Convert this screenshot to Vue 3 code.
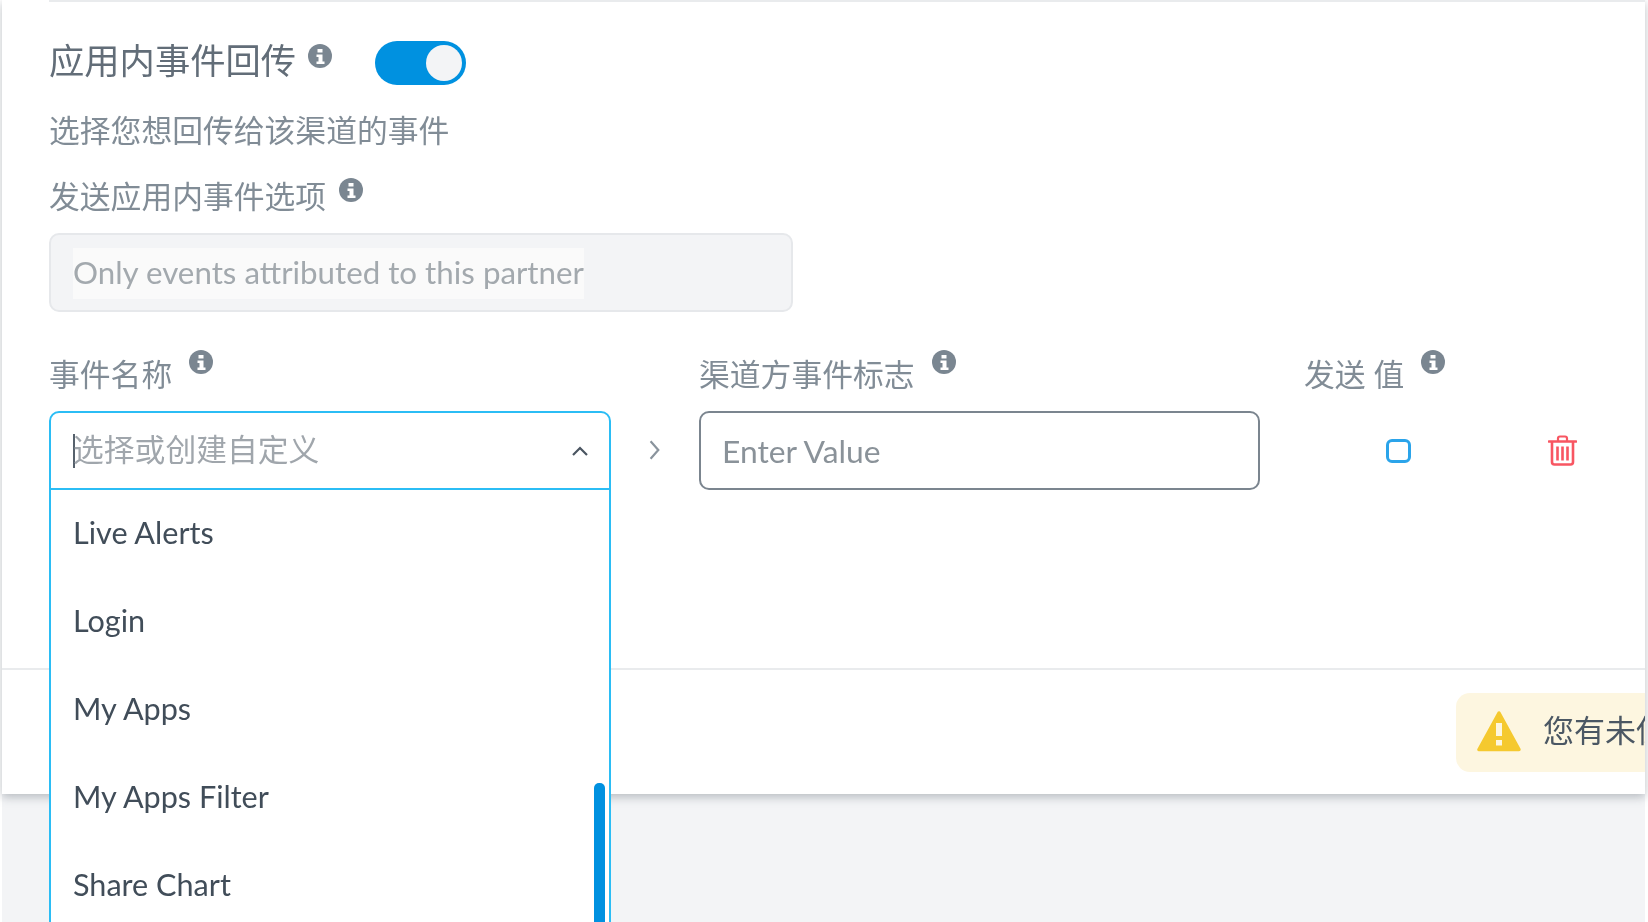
<script setup>
const options = ['Live Alerts', 'Login', 'My Apps', 'My Apps Filter', 'Share Chart', 'Sign Up']
</script>

<template>
  <div class="page">
    <main class="panel">
      <section class="form">
        <div class="title-row">
          <h2 class="title">应用内事件回传</h2>
          <svg class="info info-title" viewBox="0 0 24 24"><circle cx="12" cy="12" r="12" fill="#7a8691"/><path d="M9.500 5h5v3.500h-5zM8.500 10.500h6v7h2V20h-8v-2.500h2v-4.500h-2z" fill="#fff"/></svg>
          <div class="toggle"><span class="knob"></span></div>
        </div>
        <p class="subtitle">选择您想回传给该渠道的事件</p>
        <div class="label option-label">
          <span>发送应用内事件选项</span>
          <svg class="info" viewBox="0 0 24 24"><circle cx="12" cy="12" r="12" fill="#7a8691"/><path d="M9.500 5h5v3.500h-5zM8.500 10.500h6v7h2V20h-8v-2.500h2v-4.500h-2z" fill="#fff"/></svg>
        </div>
        <div class="disabled-input"><span class="disabled-text">Only events attributed to this partner</span></div>

        <div class="mapping">
          <div class="col col-event">
            <div class="label">
              <span>事件名称</span>
              <svg class="info" viewBox="0 0 24 24"><circle cx="12" cy="12" r="12" fill="#7a8691"/><path d="M9.500 5h5v3.500h-5zM8.500 10.500h6v7h2V20h-8v-2.500h2v-4.500h-2z" fill="#fff"/></svg>
            </div>
            <div class="select">
              <span class="caret"></span>
              <span class="placeholder">选择或创建自定义</span>
              <svg class="chevron-up" viewBox="0 0 18 12"><path d="M2 10l7-7 7 7" fill="none" stroke="#4a5561" stroke-width="2.200"/></svg>
              <ul class="menu">
                <li v-for="o in options" :key="o" class="menu-item">{{ o }}</li>
                <span class="scrollbar"></span>
              </ul>
            </div>
          </div>
          <div class="arrow-col">
            <svg class="chevron-right" viewBox="0 0 12 20"><path d="M2 2l7 8-7 8" fill="none" stroke="#8a949d" stroke-width="2"/></svg>
          </div>
          <div class="col col-value">
            <div class="label">
              <span>渠道方事件标志</span>
              <svg class="info" viewBox="0 0 24 24"><circle cx="12" cy="12" r="12" fill="#7a8691"/><path d="M9.500 5h5v3.500h-5zM8.500 10.500h6v7h2V20h-8v-2.500h2v-4.500h-2z" fill="#fff"/></svg>
            </div>
            <div class="value-input">Enter Value</div>
          </div>
          <div class="col col-send">
            <div class="label">
              <span>发送 值</span>
              <svg class="info" viewBox="0 0 24 24"><circle cx="12" cy="12" r="12" fill="#7a8691"/><path d="M9.500 5h5v3.500h-5zM8.500 10.500h6v7h2V20h-8v-2.500h2v-4.500h-2z" fill="#fff"/></svg>
            </div>
            <div class="send-controls">
              <span class="checkbox"></span>
              <svg class="trash" viewBox="0 0 29 31">
                <path d="M1 6.500h27" stroke="#f85662" stroke-width="2.600" fill="none" stroke-linecap="round"/>
                <path d="M10 6V3.500Q10 1.500 12 1.500h5Q19 1.500 19 3.500V6" stroke="#f85662" stroke-width="2.200" fill="none"/>
                <path d="M4 7v20q0 2.500 2.500 2.500h16q2.500 0 2.500-2.500V7" stroke="#f85662" stroke-width="2.600" fill="none"/>
                <path d="M9.500 11.500v14M14.500 11.500v14M19.500 11.500v14" stroke="#f85662" stroke-width="2.600" fill="none"/>
              </svg>
            </div>
          </div>
        </div>
      </section>

      <footer class="footer">
        <div class="warning">
          <svg class="warn-icon" viewBox="0 0 44 41"><path d="M22 2L2 38.500h40z" fill="#f5c92f" stroke="#f5c92f" stroke-width="3.500" stroke-linejoin="round"/><path d="M19 12h6v13h-6zM19 29h6v5.500h-6z" fill="#fdf6e0"/></svg>
          <span class="warn-text">您有未保存的更改</span>
        </div>
      </footer>
    </main>
  </div>
</template>

<style>
html, body { margin: 0; background: #fff; }
</style>

<style scoped>
.page {
  box-sizing: border-box;
  width: 1648px;
  height: 922px;
  padding: 0 3px 0 2px;
  overflow: hidden;
  font-family: Lato, "Noto Sans CJK SC", sans-serif;
  filter: blur(0.6px);
  background: linear-gradient(#fff, #fff) right / 3px 100% no-repeat,
              linear-gradient(#fff, #fff) left / 2px 100% no-repeat,
              #f3f4f6;
}
.panel {
  height: 794px;
  position: relative;
  display: flex;
  flex-direction: column;
  background: #fff;
  box-shadow: 0 3px 9px rgba(90, 100, 110, .4);
}
.form {
  height: 668px;
  box-sizing: border-box;
  margin-left: 47px;
  border-top: 2px solid #e9ebed;
  flex: none;
}
.title-row {
  display: flex;
  align-items: flex-start;
  height: 82px;
  padding-top: 39px;
  box-sizing: border-box;
}
.title {
  margin: -3px 0 0;
  font-size: 35.300px;
  line-height: 46px;
  font-weight: 400;
  color: #626d78;
}
.info { width: 24px; height: 24px; flex: none; }
.info-title { margin: 3px 0 0 12px; }
.toggle {
  width: 91px;
  height: 44px;
  margin: 0 0 0 43px;
  border-radius: 22px;
  background: #0091e0;
  display: flex;
  align-items: center;
  justify-content: flex-end;
  padding-right: 4px;
  box-sizing: border-box;
}
.knob { width: 36px; height: 36px; border-radius: 50%; background: #f3f4f6; }
.subtitle {
  margin: 26px 0 0;
  font-size: 30.800px;
  line-height: 42px;
  color: #818c96;
}
.label {
  display: flex;
  align-items: flex-start;
  gap: 17px;
  font-size: 30.800px;
  line-height: 42px;
  color: #818c96;
  white-space: pre;
}
.label .info { margin-top: -4px; }
.option-label { margin-top: 24px; gap: 13px; }
.option-label .info { margin-top: 2px; }
.disabled-input {
  box-sizing: border-box;
  width: 744px;
  height: 79px;
  margin-top: 15px;
  border: 2px solid #e6e8eb;
  border-radius: 10px;
  background: #f3f4f6;
  padding: 13px 0 0 22px;
}
.disabled-text {
  display: inline-block;
  height: 51px;
  line-height: 49px;
  font-size: 31.300px;
  color: #a3a9ae;
  background: #fafafa;
}
.mapping {
  display: flex;
  margin-top: 42px;
  align-items: flex-start;
}
.col { flex: none; }
.col-event { width: 562px; }
.col-value { width: 561px; }
.col-send { width: 338px; margin-left: 44px; }
.arrow-col {
  width: 88px;
  flex: none;
  display: flex;
  justify-content: center;
  padding-top: 85px;
}
.arrow-col .chevron-right { width: 14px; height: 22px; }
.select {
  position: relative;
  box-sizing: border-box;
  height: 79px;
  margin-top: 15px;
  border: 2px solid #2bbdf5;
  border-radius: 10px 10px 0 0;
  display: flex;
  align-items: center;
  padding-left: 22px;
  font-size: 30.800px;
  line-height: 40px;
  color: #a0a6ac;
}
.caret { width: 2px; height: 34px; background: #56616c; margin-right: -2px; }
.placeholder { flex: 1; margin-top: -2px; }
.chevron-up { width: 18px; height: 12px; margin-right: 20px; }
.menu {
  position: absolute;
  left: -2px;
  right: -2px;
  top: 77px;
  height: 460px;
  margin: 0;
  padding: 0;
  list-style: none;
  box-sizing: border-box;
  background: #fff;
  border-left: 2px solid #2bbdf5;
  border-right: 2px solid #2bbdf5;
  z-index: 2;
  overflow: hidden;
}
.menu-item {
  height: 88px;
  line-height: 86px;
  padding-left: 22px;
  font-size: 30.600px;
  color: #414d59;
}
.scrollbar {
  position: absolute;
  right: 4px;
  top: 293px;
  width: 11px;
  height: 300px;
  border-radius: 5px;
  background: #0091e0;
}
.value-input {
  box-sizing: border-box;
  height: 79px;
  margin-top: 15px;
  border: 2px solid #7b858f;
  border-radius: 10px;
  padding-left: 21px;
  line-height: 77px;
  font-size: 31.800px;
  color: #8a9299;
}
.send-controls {
  display: flex;
  align-items: center;
  height: 79px;
  margin-top: 15px;
  padding-left: 82px;
}
.checkbox {
  box-sizing: border-box;
  width: 25px;
  height: 24px;
  border: 3px solid #2ba4ea;
  border-radius: 6px;
}
.trash { width: 29px; height: 31px; margin-left: 137px; }
.footer {
  flex: 1;
  border-top: 2px solid #e9ebed;
  padding-top: 23px;
  display: flex;
  justify-content: flex-end;
  overflow: hidden;
}
.warning {
  box-sizing: border-box;
  width: 189px;
  height: 79px;
  background: #fdf6e0;
  border-radius: 14px 0 0 14px;
  display: flex;
  align-items: center;
  padding-left: 21px;
  overflow: hidden;
  flex: none;
}
.warn-icon { width: 44px; height: 41px; flex: none; margin-top: -3px; }
.warn-text {
  margin: -8px 0 0 22px;
  font-size: 31px;
  color: #4b5763;
  white-space: nowrap;
}
</style>
